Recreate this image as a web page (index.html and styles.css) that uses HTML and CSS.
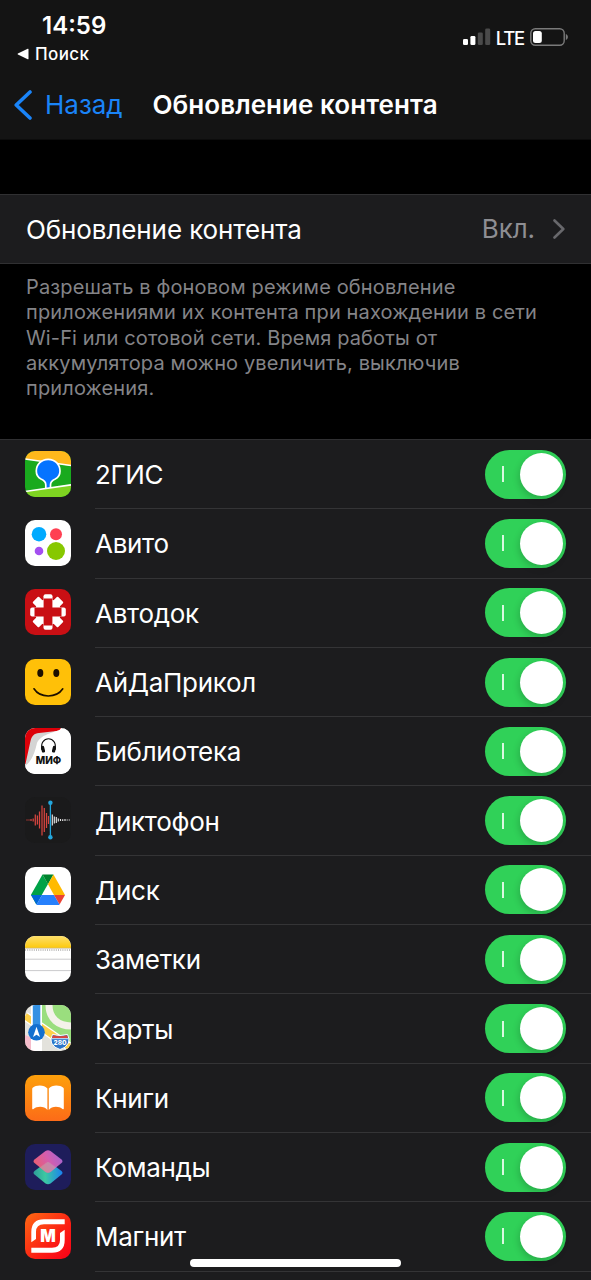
FILE: index.html
```html
<!DOCTYPE html>
<html lang="ru">
<head>
  <meta charset="UTF-8" />
  <meta name="viewport" content="width=device-width, initial-scale=1.0"/>
  <title>Обновление контента</title>
  <link rel="stylesheet" href="styles.css">
</head>
<body>
  <div class="screen">
    <header class="header">
      <div class="status-bar">
        <div class="status-left">
          <div class="time">14:59</div>
          <div class="back-app">
            <svg class="back-app-arrow" viewBox="0 0 12 12"><path d="M11.5 1.2v9.6Q11.5 11.600 10.700 11.200L.9 6.500Q.2 6 .9 5.500L10.700.8Q11.500.4 11.500 1.200z" fill="#fff"/></svg>
            <span>Поиск</span>
          </div>
        </div>
        <div class="status-right">
          <svg class="signal" viewBox="0 0 28 18">
            <rect x="0" y="11" width="5" height="6" rx="1.300" fill="#fff"/>
            <rect x="7.400" y="8" width="5" height="9" rx="1.300" fill="#fff"/>
            <rect x="14.800" y="4.500" width="5" height="12.500" rx="1.300" fill="#4a4a4a"/>
            <rect x="22.200" y="0.500" width="5" height="16.500" rx="1.300" fill="#4a4a4a"/>
          </svg>
          <span class="network">LTE</span>
          <svg class="battery" viewBox="0 0 39 18">
            <rect x="0.800" y="0.800" width="33.400" height="16.400" rx="4.500" fill="none" stroke="#7a7a7a" stroke-width="1.400"/>
            <rect x="3" y="3" width="8.800" height="12" rx="2.500" fill="#fff"/>
            <path d="M35.800 6v6c1.300-.5 2.100-1.600 2.100-3s-.8-2.500-2.100-3z" fill="#7a7a7a"/>
          </svg>
        </div>
      </div>
      <nav class="nav-bar">
        <a class="nav-back" href="#">
          <svg class="nav-chevron" viewBox="0 0 18 30"><path d="M16 2L2.200 15L16 28" fill="none" stroke="#1a84f8" stroke-width="3.600" stroke-linecap="round" stroke-linejoin="round"/></svg>
          <span>Назад</span>
        </a>
        <h1>Обновление контента</h1>
      </nav>
    </header>

    <section class="group">
      <div class="setting">
        <span class="setting-name">Обновление контента</span>
        <span class="setting-value">Вкл.</span>
        <svg class="chevron" viewBox="0 0 12 20"><path d="M1.500 1.500L10.300 10L1.500 18.500" fill="none" stroke="#68686c" stroke-width="2.600" stroke-linecap="round" stroke-linejoin="round"/></svg>
      </div>
    </section>
    <p class="note">Разрешать в фоновом режиме обновление<br>приложениями их контента при нахождении в сети<br>Wi-Fi или сотовой сети. Время работы от<br>аккумулятора можно увеличить, выключив<br>приложения.</p>

    <ul class="apps">
      <li class="app">
        <svg class="icon" viewBox="0 0 46 46">
          <rect width="46" height="46" fill="#19aa1e"/>
          <path d="M0 0h46v15L0 8z" fill="#ffb81c"/>
          <path d="M0 8L46 14.500" stroke="#fff" stroke-width="1.700"/>
          <path d="M0 40.500L46 33.500V46H0z" fill="#7ed321"/>
          <path d="M20.800 37.300V34C20.800 30.500 18.500 29 16 28C12.800 26.500 11.300 23.500 11.300 20C11.300 13.200 16.500 8.300 23.200 8.300S35 13.200 35 20C35 23.500 33.600 26.500 30.300 28C27.800 29 25.500 30.500 25.500 34V36.600" fill="#0573ff" stroke="#fff" stroke-width="1.700"/>
          <path d="M0 40.500L46 33.800" stroke="#fff" stroke-width="1.700"/>
        </svg>
        <div class="app-body"><span class="app-name">2ГИС</span><span class="toggle"><i></i></span></div>
      </li>
      <li class="app">
        <svg class="icon" viewBox="0 0 46 46">
          <rect width="46" height="46" fill="#fff"/>
          <circle cx="14" cy="14.200" r="7.300" fill="#00aaff"/>
          <circle cx="31" cy="14.200" r="6" fill="#ff4053"/>
          <circle cx="14" cy="31" r="4.300" fill="#a44ff0"/>
          <circle cx="31" cy="31" r="9" fill="#87c800"/>
        </svg>
        <div class="app-body"><span class="app-name">Авито</span><span class="toggle"><i></i></span></div>
      </li>
      <li class="app">
        <svg class="icon" viewBox="0 0 46 46">
          <rect width="46" height="46" fill="#c90f14"/>
          <circle cx="23" cy="23" r="13" fill="#fff"/>
          <g fill="#fff">
            <rect x="18.500" y="5.200" width="9" height="35.600" rx="2"/>
            <rect x="5.200" y="18.500" width="35.600" height="9" rx="2"/>
            <rect x="18.700" y="5.200" width="8.600" height="35.600" rx="1" transform="rotate(45 23 23)"/>
            <rect x="18.700" y="5.200" width="8.600" height="35.600" rx="1" transform="rotate(-45 23 23)"/>
          </g>
          <path d="M18.600 9.500h8.800v9.100h9.100v8.800h-9.100v9.100h-8.800v-9.100H9.500v-8.800h9.100z" fill="#c90f14"/>
        </svg>
        <div class="app-body"><span class="app-name">Автодок</span><span class="toggle"><i></i></span></div>
      </li>
      <li class="app">
        <svg class="icon" viewBox="0 0 46 46">
          <rect width="46" height="46" fill="#ffc008"/>
          <ellipse cx="15.300" cy="14" rx="3" ry="4" fill="#1c0f00"/>
          <ellipse cx="31.300" cy="14" rx="3" ry="4" fill="#1c0f00"/>
          <path d="M9 29.800C15 39.300 31.500 39.300 37.800 29.800" fill="none" stroke="#1c0f00" stroke-width="1.600" stroke-linecap="round"/>
        </svg>
        <div class="app-body"><span class="app-name">АйДаПрикол</span><span class="toggle"><i></i></span></div>
      </li>
      <li class="app">
        <svg class="icon" viewBox="0 0 46 46">
          <rect width="46" height="46" fill="#fff"/>
          <path d="M0 0H36L34 3L8 12L2 36H0z" fill="#dc0009"/>
          <path d="M0 38L5.500 13C7 7.500 9 5.500 14 5L36 2.500L20 8L9 26C7 32 4 36 0 38z" fill="#d4d4d4"/>
          <path d="M46 0H39C29 5 14 6 11.500 17C9.500 26 6 34 0 38V46H46z" fill="#fff"/>
          <path d="M17 22C13.500 7 33.500 7 30 22" fill="none" stroke="#111" stroke-width="1.100"/>
          <rect x="16.300" y="17.800" width="3.300" height="6.800" rx="1.500" fill="#111" transform="rotate(-14 18 21)"/>
          <rect x="27.400" y="17.800" width="3.300" height="6.800" rx="1.500" fill="#111" transform="rotate(14 29 21)"/>
          <text class="mif-text" x="23.500" y="35.600">МИФ</text>
        </svg>
        <div class="app-body"><span class="app-name">Библиотека</span><span class="toggle"><i></i></span></div>
      </li>
      <li class="app">
        <svg class="icon" viewBox="0 0 46 46">
          <rect width="46" height="46" fill="#1a1a1b"/>
          <path d="M2 22.500v1M4 22.500v1M6 22v2M8.200 21.500v3M10.300 17.500v11M12.400 18.500v9M14.500 14.500v17M17 8.500v30M19.300 11v24M21.500 16v15M23.500 19v8" stroke="#d6453f" stroke-width="1.250"/>
          <path d="M27.300 17.500v11M29.300 19.500v7M31.300 20v6M33.300 21.500v3M35.500 22v2M37.700 22.300v1.600M40 22v2M42.200 22.500v1M44.300 22.500v1" stroke="#e4e4e4" stroke-width="1.150"/>
          <path d="M25.400 5.500v35" stroke="#23a6dc" stroke-width="1.300"/>
          <circle cx="25.400" cy="5.800" r="2.200" fill="#23a6dc"/>
          <circle cx="25.400" cy="40.200" r="2.200" fill="#23a6dc"/>
        </svg>
        <div class="app-body"><span class="app-name">Диктофон</span><span class="toggle"><i></i></span></div>
      </li>
      <li class="app">
        <svg class="icon" viewBox="0 0 46 46">
          <rect width="46" height="46" fill="#fff"/>
          <path d="M17.500 7.500L6 27.800L11.300 37.500L23 17z" fill="#00a247"/>
          <path d="M17.500 7.500H28.500L23 17.200z" fill="#00832d"/>
          <path d="M28.500 7.500L40 28H29L23 17.200z" fill="#ffba00"/>
          <path d="M6 28H17L11.500 37.500z" fill="#0066da"/>
          <path d="M17 28H29L34.600 37.500Q34 38 33 38H13Q12 38 11.500 37.500z" fill="#2680fc"/>
          <path d="M29 28H40L34.600 37.500z" fill="#ea4335"/>
        </svg>
        <div class="app-body"><span class="app-name">Диск</span><span class="toggle"><i></i></span></div>
      </li>
      <li class="app">
        <svg class="icon" viewBox="0 0 46 46">
          <defs>
            <linearGradient id="notes" x1="0" y1="0" x2="0" y2="1"><stop offset="0" stop-color="#fddf6c"/><stop offset="1" stop-color="#fdc90c"/></linearGradient>
          </defs>
          <rect width="46" height="46" fill="#fff"/>
          <rect width="46" height="12" fill="url(#notes)"/>
          <path d="M0 12.200H46" stroke="#c8b88a" stroke-width="0.800"/>
          <path d="M0 14H46" stroke="#a9a9a9" stroke-width="1.300" stroke-dasharray="1 1.200"/>
          <path d="M0 23.200H46M0 34.600H46" stroke="#c4c4c6" stroke-width="0.900"/>
        </svg>
        <div class="app-body"><span class="app-name">Заметки</span><span class="toggle"><i></i></span></div>
      </li>
      <li class="app">
        <svg class="icon" viewBox="0 0 46 46">
          <rect width="46" height="46" fill="#e3e2dc"/>
          <path d="M0 30L10 34V46H0z" fill="#f5bccb"/>
          <path d="M16 0H46V38L16 18z" fill="#9ade7e"/>
          <path d="M24 0C24 14 34 21 46 21" fill="none" stroke="#f4f2ea" stroke-width="7"/>
          <path d="M0 11L46 43" stroke="#fff" stroke-width="9"/>
          <path d="M0 11L46 43" stroke="#fdd04a" stroke-width="6.500"/>
          <path d="M6 0H17V46H6z" fill="#fff"/>
          <path d="M7.800 0H15.300V25H7.800z" fill="#3491e3"/>
          <circle cx="11.500" cy="27.300" r="8.300" fill="#1470cf"/>
          <path d="M11.500 21.800L15 32L11.500 29.700L8 32z" fill="#fff"/>
          <path d="M27.500 29.500Q35 31.500 42.500 29.500Q45 34 43.500 38Q41 43 35 44.500Q29 43 26.500 38Q25 34 27.500 29.500z" fill="#2c75c8" stroke="#fff" stroke-width="1"/>
          <path d="M28 30.300Q35 32 42 30.300L43 33H27z" fill="#d9453f"/>
          <path d="M26.400 33.700H43.600" stroke="#fff" stroke-width="0.800"/>
          <text class="road-text" x="35" y="40.200">280</text>
        </svg>
        <div class="app-body"><span class="app-name">Карты</span><span class="toggle"><i></i></span></div>
      </li>
      <li class="app">
        <svg class="icon" viewBox="0 0 46 46">
          <defs>
            <linearGradient id="books" x1="0" y1="0" x2="0" y2="1"><stop offset="0" stop-color="#fda00b"/><stop offset="1" stop-color="#fc6b18"/></linearGradient>
          </defs>
          <rect width="46" height="46" fill="url(#books)"/>
          <path d="M22.400 13.500C19.500 9.500 11 9.500 7.700 12.800Q7.200 13.300 7.200 14V33.500Q7.200 34.800 8.500 34C12 30.800 19.500 30.800 22.400 35z" fill="#fff"/>
          <path d="M23.800 13.500C26.700 9.500 35 9.500 38.300 12.800Q38.800 13.300 38.800 14V33.500Q38.800 34.800 37.500 34C34 30.800 26.700 30.800 23.800 35z" fill="#fff"/>
        </svg>
        <div class="app-body"><span class="app-name">Книги</span><span class="toggle"><i></i></span></div>
      </li>
      <li class="app">
        <svg class="icon" viewBox="0 0 46 46">
          <defs>
            <linearGradient id="cmd-top" x1="0" y1="0.700" x2="1" y2="0.300"><stop offset="0" stop-color="#f9636c"/><stop offset="0.550" stop-color="#e262b4"/><stop offset="1" stop-color="#b06ad8"/></linearGradient>
            <linearGradient id="cmd-bottom" x1="0" y1="0.500" x2="1" y2="0.500"><stop offset="0" stop-color="#2e9c98"/><stop offset="0.400" stop-color="#3cc9a2"/><stop offset="1" stop-color="#1a82f0"/></linearGradient>
          </defs>
          <rect width="46" height="46" fill="#1e1d5b"/>
          <path d="M21 18.500Q23 17.300 25 18.500L36.500 27Q38.500 28.800 36.500 30.600L25.500 39.500Q23 41 20.500 39.500L9.500 30.600Q7.500 28.800 9.500 27z" fill="url(#cmd-bottom)"/>
          <path d="M20.500 7Q23 5.500 25.500 7L36.500 15.500Q38.500 17.300 36.500 19.100L25.500 28Q23 29.500 20.500 28L9.500 19.100Q7.500 17.300 9.500 15.500z" fill="url(#cmd-top)" fill-opacity="0.930"/>
          <path d="M23 17.800L31 23.500L25.500 28Q23 29.500 20.500 28L15 23.500z" fill="#b9a0a8" fill-opacity="0.550"/>
        </svg>
        <div class="app-body"><span class="app-name">Команды</span><span class="toggle"><i></i></span></div>
      </li>
      <li class="app">
        <svg class="icon" viewBox="0 0 46 46">
          <defs>
            <linearGradient id="magnit" x1="0" y1="0" x2="1" y2="1"><stop offset="0" stop-color="#ff6a13"/><stop offset="0.600" stop-color="#fb1f14"/><stop offset="1" stop-color="#f80018"/></linearGradient>
          </defs>
          <rect width="46" height="46" fill="url(#magnit)"/>
          <path d="M39.700 6.300V11.200H19Q11 11.200 11 19V26L6.300 29.300V19Q6.300 6.300 19 6.300z" fill="#fff"/>
          <path d="M6.300 39.700V34.800H27Q35 34.800 35 27V20L39.700 16.700V27Q39.700 39.700 27 39.700z" fill="#fff"/>
          <text class="magnit-text" x="23" y="29.400" textLength="15.500" lengthAdjust="spacingAndGlyphs">М</text>
        </svg>
        <div class="app-body"><span class="app-name">Магнит</span><span class="toggle"><i></i></span></div>
      </li>
    </ul>
    <div class="home-indicator"></div>
  </div>
</body>
</html>
```
FILE: styles.css
```css
* {
  box-sizing: border-box;
}

body {
  margin: 0;
  background: #000;
  color: #fff;
  font-family: Inter, "Liberation Sans", sans-serif;
}

.screen {
  position: relative;
  width: 591px;
  height: 1280px;
  overflow: hidden;
}

.header {
  height: 140px;
  background: #141414;
  border-bottom: 1px solid #0c0c0c;
}

.status-bar {
  display: flex;
  justify-content: space-between;
  height: 70px;
  padding: 11px 22px 0 17px;
}

.time {
  padding-left: 25px;
  font-size: 24px;
  font-weight: 600;
  line-height: 30px;
}

.back-app {
  display: flex;
  align-items: center;
  gap: 6px;
  margin-top: 2px;
  font-size: 17px;
  font-weight: 500;
  line-height: 22px;
  letter-spacing: 0.4px;
}

.back-app-arrow {
  width: 12px;
  height: 12px;
}

.status-right {
  display: flex;
  align-items: center;
  height: 18px;
  margin-top: 17px;
}

.signal {
  width: 28px;
  height: 18px;
}

.network {
  margin: 1px 6px 0 5px;
  font-size: 18.5px;
  font-weight: 500;
  letter-spacing: -1.2px;
}

.battery {
  width: 39px;
  height: 18px;
}

.nav-bar {
  display: flex;
  align-items: center;
  height: 69px;
  padding-left: 14px;
}

.nav-back {
  display: flex;
  align-items: center;
  gap: 13px;
  width: 138.5px;
  color: #1a84f8;
  font-size: 26px;
  text-decoration: none;
}

.nav-chevron {
  width: 18px;
  height: 30px;
}

.nav-bar h1 {
  margin: 0;
  font-size: 26px;
  font-weight: 600;
  letter-spacing: 0.06px;
  white-space: nowrap;
}

.group {
  margin-top: 54px;
}

.setting {
  display: flex;
  align-items: center;
  height: 70px;
  padding: 0 26px;
  background: #1c1c1e;
  border-top: 1px solid #303032;
  border-bottom: 1px solid #303032;
  font-size: 26px;
  letter-spacing: -0.1px;
}

.setting-name {
  flex: 1;
}

.setting-value {
  margin: 0 18px 2px 0;
  color: #8e8e93;
}

.chevron {
  width: 12px;
  height: 20px;
}

.note {
  height: 175px;
  margin: 0;
  padding: 11px 26px 0;
  color: #848488;
  font-size: 20px;
  line-height: 25.3px;
  letter-spacing: 0.14px;
  white-space: nowrap;
}

.apps {
  margin: 0;
  padding: 0;
  height: 841px;
  list-style: none;
  background: #1c1c1e;
  border-top: 1px solid #303032;
}

.app {
  display: flex;
  align-items: center;
  height: 69.3px;
  padding-left: 25px;
}

.icon {
  flex: none;
  width: 46px;
  height: 46px;
  margin: 0 24px 1.5px 0;
  border-radius: 10px;
}

.app-body {
  display: flex;
  flex: 1;
  align-items: center;
  justify-content: space-between;
  height: 100%;
  padding-right: 25px;
  border-bottom: 1px solid #343436;
}

.app-name {
  padding-top: 1px;
  font-size: 26px;
  letter-spacing: -0.3px;
}

.toggle {
  display: flex;
  align-items: center;
  justify-content: space-between;
  width: 81px;
  height: 49px;
  padding: 0 3px 0 17px;
  border-radius: 25px;
  background: #30d158;
}

.toggle i {
  width: 2px;
  height: 16px;
  background: #d9f8e0;
}

.toggle::after {
  content: "";
  width: 43px;
  height: 43px;
  border-radius: 50%;
  background: #fff;
  box-shadow: -1px 3px 7px rgba(0, 0, 0, 0.18);
}

.mif-text {
  fill: #111;
  font-size: 10px;
  font-weight: 800;
  text-anchor: middle;
}

.road-text {
  fill: #fff;
  font-size: 6.5px;
  font-weight: 800;
  text-anchor: middle;
}

.magnit-text {
  fill: #fff;
  font-size: 17px;
  font-weight: 900;
  text-anchor: middle;
}

.home-indicator {
  position: absolute;
  left: 190px;
  bottom: 13px;
  width: 211px;
  height: 8px;
  border-radius: 4px;
  background: #fff;
}
```
